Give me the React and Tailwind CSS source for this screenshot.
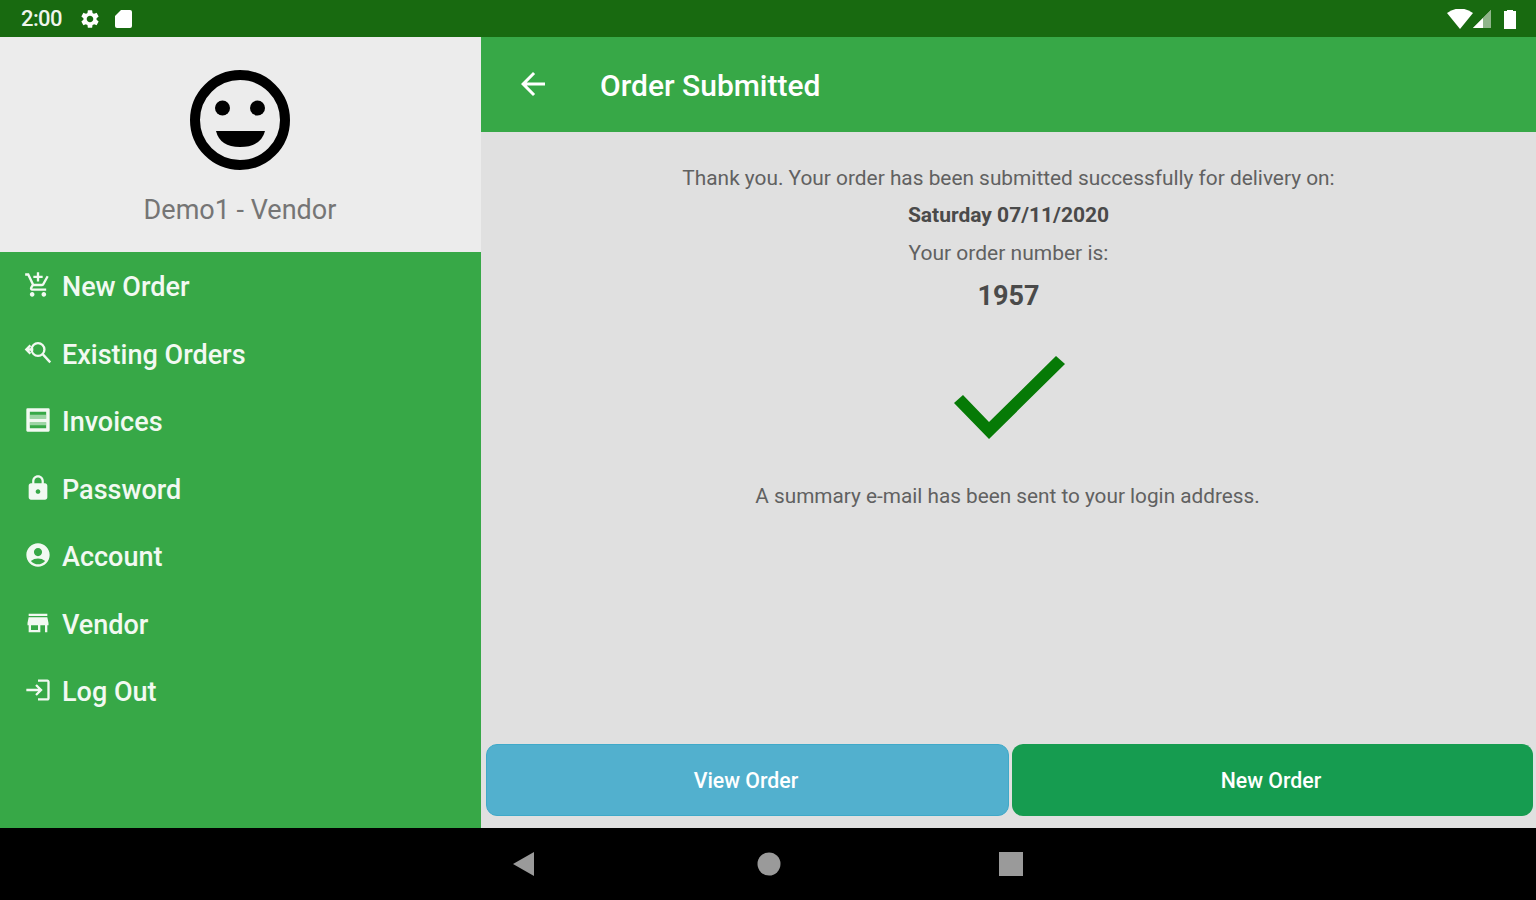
import React from "react";
import {
  MdSettings, MdArrowBack, MdOutlineAddShoppingCart,
  MdLock, MdAccountCircle, MdStore, MdOutlineLogin,
} from "react-icons/md";

const SearchBack = ({ className }) => (
  <svg viewBox="0 0 24 24" className={className} fill="none" stroke="currentColor" strokeWidth="2">
    <circle cx="12" cy="9" r="5.5" />
    <path d="M16 13l6.5 7" />
    <path d="M2 9h6M5.5 5.5L2 9l3.5 3.5" />
  </svg>
);

const InvoiceBox = ({ className }) => (
  <svg viewBox="0 0 24 24" className={className} fill="currentColor">
    <path fillRule="evenodd" d="M3 2H21a1 1 0 0 1 1 1V21a1 1 0 0 1-1 1H3a1 1 0 0 1-1-1V3a1 1 0 0 1 1-1ZM5 5V11H19V5ZM5 14V19H19V14Z" />
    <path d="M5 7.5H19V11H5ZM5 14H19V16.5H5Z" opacity="0.55" />
  </svg>
);

const items = [
  ["New Order", MdOutlineAddShoppingCart],
  ["Existing Orders", SearchBack],
  ["Invoices", InvoiceBox],
  ["Password", MdLock],
  ["Account", MdAccountCircle],
  ["Vendor", MdStore],
  ["Log Out", MdOutlineLogin],
];

export default function App() {
  return (
    <div className="w-[1536px] h-[900px] flex flex-col overflow-hidden font-['Roboto',sans-serif]">
      <div className="h-[37px] shrink-0 bg-[#186a10] flex items-center pl-[21px] pr-[20px] text-white">
        <span className="text-[22px] font-medium tracking-[-0.6px] w-[43px] leading-none text-[#eef5ec]">2:00</span>
        <MdSettings className="w-[22px] h-[22px] ml-[15px]" />
        <svg viewBox="0 0 17 18" className="w-[17px] h-[18px] ml-[14px]"><path d="M6 0H15a2 2 0 0 1 2 2V16a2 2 0 0 1-2 2H2a2 2 0 0 1-2-2V6Z" fill="#fff" /></svg>
        <div className="ml-auto flex items-center">
          <svg viewBox="0 0 26 20" className="w-[26px] h-[20px]"><path d="M0 4Q13-5 26 4L13 20Z" fill="#fff" /></svg>
          <svg viewBox="0 0 18 18" className="w-[18px] h-[18px]"><path d="M18 0V18H0Z" fill="#cfe0cc" /><path d="M10 8V18H18V0Z" fill="#8fb58a" /><path d="M0 18L10 8V18Z" fill="#fff" /></svg>
          <svg viewBox="0 0 12 20" className="w-[12px] h-[20px] ml-[13px]"><path d="M3 2V1H9V2H12V20H0V2Z" fill="#fff" /></svg>
        </div>
      </div>

      <div className="flex-1 flex min-h-0">
        <aside className="w-[481px] shrink-0 flex flex-col bg-[#37a847]">
          <div className="h-[215px] bg-[#ececec] flex flex-col items-center pt-[33px] pr-[1px]">
            <svg viewBox="0 0 100 100" className="w-[100px] h-[100px]">
              <circle cx="50" cy="50" r="45" fill="none" stroke="#000" strokeWidth="10" />
              <circle cx="32.5" cy="38" r="7.5" />
              <circle cx="67.5" cy="38" r="7.5" />
              <path d="M26 61H75Q71 77 50 77Q30 77 26 61Z" />
            </svg>
            <span className="mt-[24px] text-[27px] leading-[32px] text-[#757575]">Demo1 - Vendor</span>
          </div>
          <nav className="flex flex-col pt-[1px]">
            {items.map(([label, Icon]) => (
              <div key={label} className="h-[67.5px] flex items-center pl-[24px] text-[#f2f9f2]">
                <Icon className="w-[28px] h-[28px] -mt-[3px]" />
                <span className="ml-[10px] mt-[2px] text-[27px] font-medium leading-none">{label}</span>
              </div>
            ))}
          </nav>
        </aside>

        <main className="flex-1 flex flex-col bg-[#e0e0e0] min-w-0">
          <header className="h-[95px] shrink-0 bg-[#37a847] flex items-center pl-[34px] text-white">
            <MdArrowBack className="w-[36px] h-[36px] -mt-[2px]" />
            <h1 className="ml-[49px] mt-[2px] text-[30px] font-medium leading-none">Order Submitted</h1>
          </header>
          <div className="flex-1 flex flex-col items-center pt-[32px] text-[#616161] text-[21px] leading-[28px]">
            <p className="text-[20.85px]">Thank you. Your order has been submitted successfully for delivery on:</p>
            <p className="mt-[9px] font-bold text-[#4a4a4a]">Saturday 07/11/2020</p>
            <p className="mt-[10px]">Your order number is:</p>
            <p className="mt-[11px] text-[27px] leading-[36px] font-bold text-[#4a4a4a]">1957</p>
            <svg viewBox="0 0 112 84" className="w-[112px] h-[84px] mt-[42px] ml-[2px]">
              <path d="M102 0L111 8L35 83L0 47L9 39L35 66Z" fill="#067a06" />
            </svg>
            <p className="mt-[42px] pr-[2px] text-[20.75px]">A summary e-mail has been sent to your login address.</p>
          </div>
          <div className="flex gap-[3px] pl-[5px] pr-[3px] pb-[12px]">
            <button className="flex-1 h-[72px] pt-[2px] pr-[3px] rounded-[11px] bg-[#52b0ce] border border-[#3fa9c9] text-white text-[21.3px] font-medium">View Order</button>
            <button className="flex-1 h-[72px] pt-[2px] pr-[3px] rounded-[11px] bg-[#169c50] text-white text-[21.3px] font-medium">New Order</button>
          </div>
        </main>
      </div>

      <div className="h-[72px] shrink-0 bg-black flex items-center pl-[513px]">
        <svg viewBox="0 0 24 24" className="w-[24px] h-[24px]"><path d="M0 12L21 0V24Z" fill="#9a9a9a" /></svg>
        <svg viewBox="0 0 24 24" className="w-[24px] h-[24px] ml-[220px]"><circle cx="12" cy="12" r="11.5" fill="#9a9a9a" /></svg>
        <div className="w-[24px] h-[24px] bg-[#9a9a9a] ml-[218px]" />
      </div>
    </div>
  );
}
